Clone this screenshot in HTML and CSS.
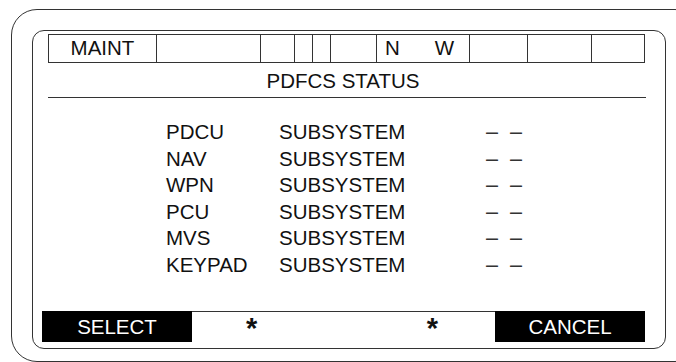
FILE: index.html
```html
<!DOCTYPE html>
<html lang="en">
<head>
  <meta charset="UTF-8">
  <meta name="viewport" content="width=device-width, initial-scale=1.0">
  <title>PDFCS Status</title>
  <link rel="stylesheet" href="styles.css">
</head>
<body>

  <div class="bezel">
    <div class="screen">

      <div class="status-bar">
        <div class="cell">MAINT</div>
        <div class="cell"></div>
        <div class="cell"></div>
        <div class="cell"></div>
        <div class="cell"></div>
        <div class="cell"></div>
        <div class="cell nw"><span>N</span><span>W</span></div>
        <div class="cell"></div>
        <div class="cell"></div>
        <div class="cell"></div>
      </div>

      <h1 class="title">PDFCS STATUS</h1>
      <hr class="rule">

      <div class="status-list">
        <span>PDCU</span><span>SUBSYSTEM</span><span class="dash">– –</span>
        <span>NAV</span><span>SUBSYSTEM</span><span class="dash">– –</span>
        <span>WPN</span><span>SUBSYSTEM</span><span class="dash">– –</span>
        <span>PCU</span><span>SUBSYSTEM</span><span class="dash">– –</span>
        <span>MVS</span><span>SUBSYSTEM</span><span class="dash">– –</span>
        <span>KEYPAD</span><span>SUBSYSTEM</span><span class="dash">– –</span>
      </div>

      <div class="softkeys">
        <div class="key">SELECT</div>
        <div class="middle">
          <span class="star">*</span>
          <span class="star">*</span>
        </div>
        <div class="key">CANCEL</div>
      </div>

    </div>
  </div>

</body>
</html>
```

FILE: styles.css
```css
html, body {
  margin: 0;
  background-color: #ffffff;
  overflow: hidden;
}
body {
  width: 676px;
  height: 362px;
  color: #111;
  font-family: "Liberation Sans", Arial, sans-serif;
  font-size: 20.5px;
}
.bezel {
  box-sizing: border-box;
  width: 690px;
  height: 353px;
  margin: 9px 0 0 11px;
  padding: 19.5px 0 0 19.5px;
  border: 1.5px solid #333;
  border-radius: 26px;
}
.screen {
  box-sizing: border-box;
  width: 634px;
  height: 319px;
  border: 1.5px solid #333;
  border-radius: 12px;
  display: flex;
  flex-direction: column;
}
.status-bar {
  display: grid;
  grid-template-columns: 107px 104px 34px 18px 18px 46px 93px 58px 64px 54px;
  height: 29px;
  margin: 3.5px 0 0 15.5px;
  width: 597px;
  box-sizing: border-box;
  border: 1.5px solid #333;
}
.cell {
  border-left: 1.5px solid #333;
  line-height: 26px;
  text-align: center;
}
.cell:first-child {
  border-left: none;
}
.nw {
  display: flex;
  padding-left: 8px;
  gap: 35px;
}
.title {
  margin: 6px 11px 0 0;
  font-size: 20.5px;
  font-weight: normal;
  line-height: 24px;
  text-align: center;
}
.rule {
  margin: 4px 18.5px 0 15.5px;
  border: none;
  border-top: 1.5px solid #333;
}
.status-list {
  display: grid;
  grid-template-columns: 113px 207px auto;
  margin: 21px 0 0 133.5px;
  line-height: 26.6px;
}
.dash {
  font-size: 21.6px;
  word-spacing: 6px;
  color: #333;
}
.softkeys {
  display: flex;
  width: 603px;
  height: 31px;
  margin: 32px 0 0 9.5px;
}
.key {
  width: 150px;
  background-color: #000;
  color: #fff;
  font-size: 20.5px;
  line-height: 31px;
  text-align: center;
}
.middle {
  flex: 1;
  display: flex;
  justify-content: space-between;
  padding: 0 57px 0 54px;
  border-top: 1.5px solid #333;
}
.star {
  font-size: 29px;
  font-weight: bold;
  line-height: 32px;
}
```
